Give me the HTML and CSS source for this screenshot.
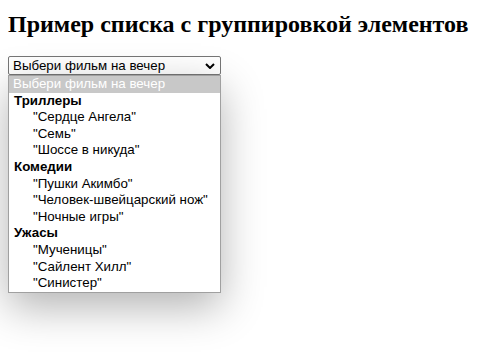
FILE: index.html
```html
<!DOCTYPE html>
<html lang="ru">
<head>
    <meta charset="UTF-8">
    <meta name="viewport" content="width=device-width, initial-scale=1.0">
    <title>Группировка элементов</title>
    <link rel="stylesheet" href="styles.css">
</head>
<body>
    <h1>Пример списка с группировкой элементов</h1>

    <div class="picker">
        <div class="select-box">
            <span>Выбери фильм на вечер</span>
            <svg class="chevron" width="10" height="6" viewBox="0 0 10 6">
                <path d="M1 1 L5 5 L9 1" fill="none" stroke="#000" stroke-width="2"/>
            </svg>
        </div>

        <div class="film-list">
            <div class="option selected">Выбери фильм на вечер</div>

            <div class="group">Триллеры</div>
            <div class="option nested">"Сердце Ангела"</div>
            <div class="option nested">"Семь"</div>
            <div class="option nested">"Шоссе в никуда"</div>

            <div class="group">Комедии</div>
            <div class="option nested">"Пушки Акимбо"</div>
            <div class="option nested">"Человек-швейцарский нож"</div>
            <div class="option nested">"Ночные игры"</div>

            <div class="group">Ужасы</div>
            <div class="option nested">"Мученицы"</div>
            <div class="option nested">"Сайлент Хилл"</div>
            <div class="option nested">"Синистер"</div>
        </div>
    </div>
</body>
</html>
```

FILE: styles.css
```css
body {
    margin: 0;
    padding: 8px;
    box-sizing: border-box;
    min-height: 100vh;
    background-color: #fff;
    font-family: "Liberation Serif", serif;
}

h1 {
    font-size: 24px;
    font-weight: bold;
    margin: 3px 0 18px 0;
}

/* the select and its open list */
.picker {
    width: 213px;
    font-family: "Liberation Sans", Arial, sans-serif;
    font-size: 13.33px;
}

.select-box {
    display: flex;
    justify-content: space-between;
    align-items: center;
    height: 19px;
    box-sizing: border-box;
    padding: 0 5px 0 4px;
    border: 1px solid #767676;
    border-radius: 2px;
    color: #000;
}

.film-list {
    box-sizing: border-box;
    background-color: #fff;
    border: 1px solid #a0a0a0;
    box-shadow: 0 14px 40px rgba(0, 0, 0, 0.3);
}

.option,
.group {
    height: 16.6px;
    line-height: 16.6px;
    padding-left: 4px;
    white-space: nowrap;
    color: #000;
}

.group {
    font-weight: bold;
    padding-left: 5px;
}

.option.nested {
    padding-left: 24px;
}

.option.selected {
    background-color: #c8c8c8;
    color: #fff;
}
```
